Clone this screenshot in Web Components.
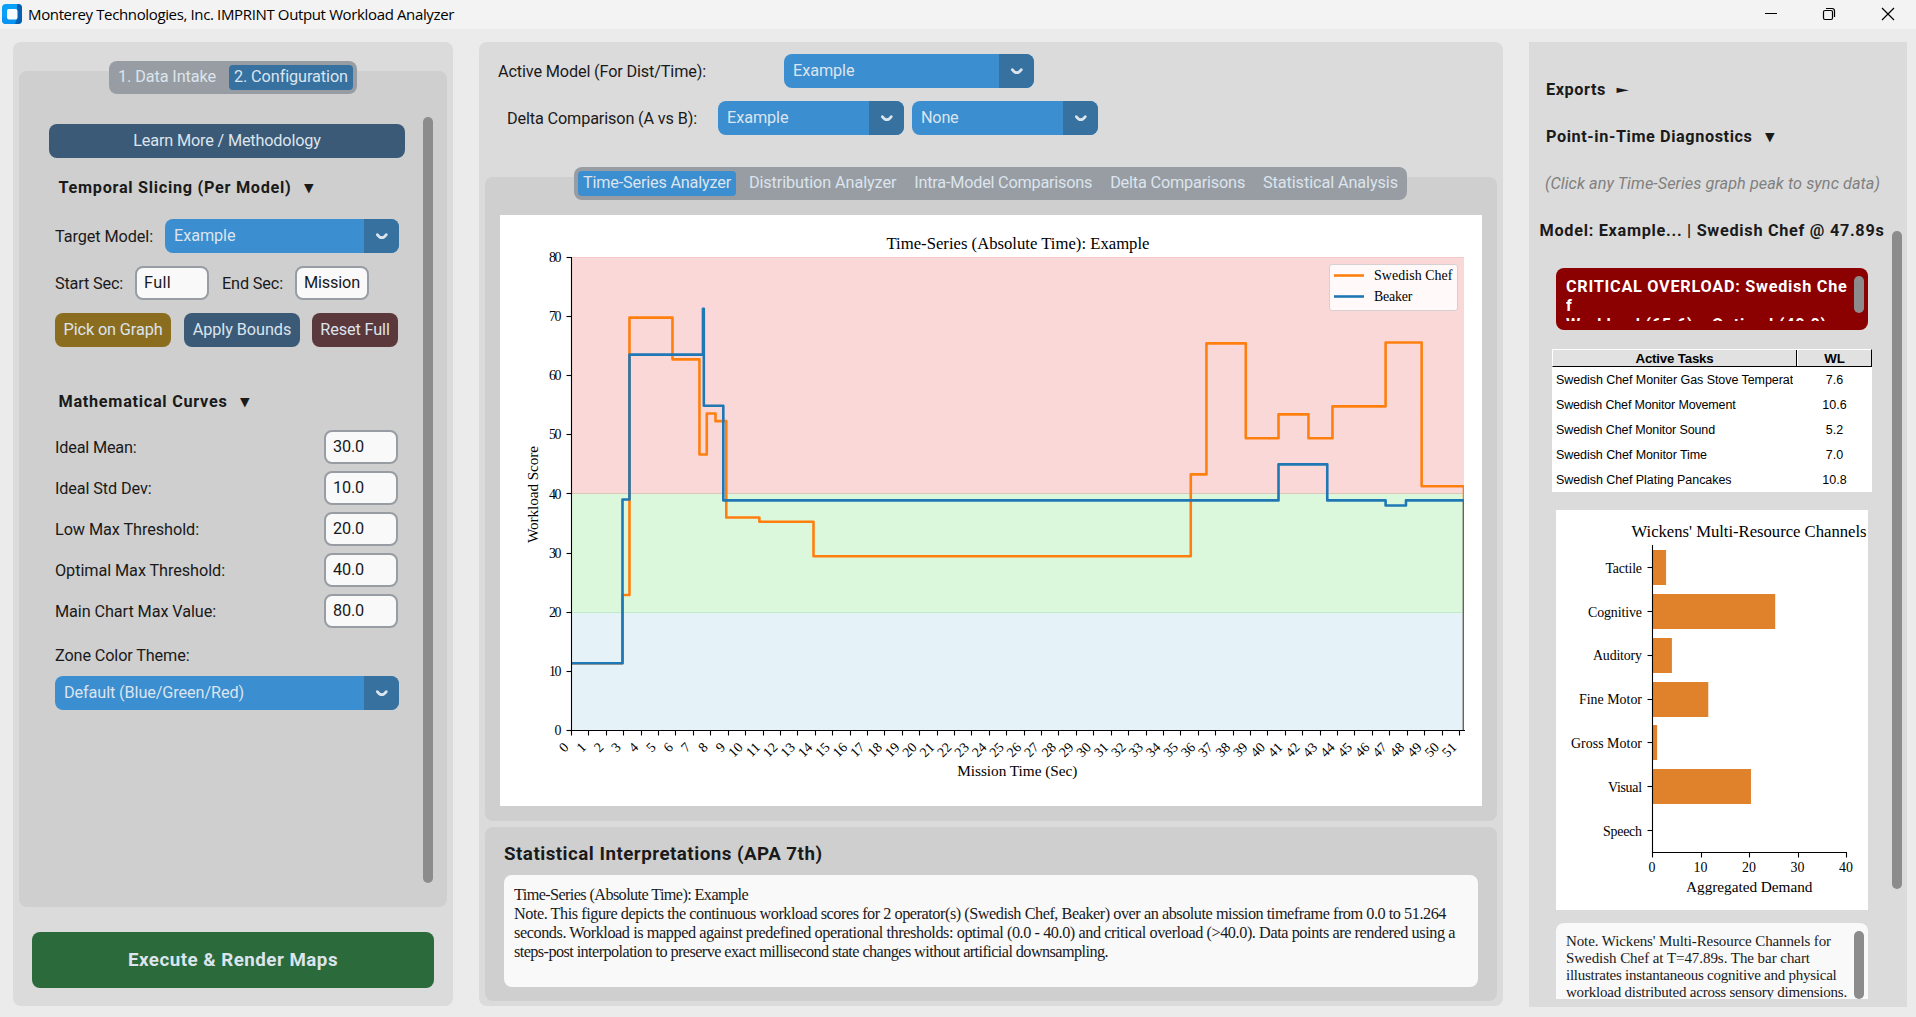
<!DOCTYPE html>
<html lang="en">
<head>
<meta charset="utf-8">
<title>Monterey Technologies, Inc. IMPRINT Output Workload Analyzer</title>
<style>
  html, body {
    margin: 0;
    height: 100%;
    overflow: hidden;
    background: #ebebeb;
    font-family: Roboto, "Liberation Sans", sans-serif;
    font-size: 16.25px;
    color: #1a1a1a;
  }
</style>
</head>
<body>
<app-window></app-window>

<script>
// small helper: attach an open shadow root and fill it
function shadow(el, html) {
  el.attachShadow({ mode: 'open' }).innerHTML = html;
}

class TitleBar extends HTMLElement {
  connectedCallback() {
    shadow(this, `
    <style>
    :host {
      display: flex;
      align-items: center;
      box-sizing: border-box;
      flex: none;
      height: 29px;
      padding: 0 21px 1px 2px;
      background: #f3f3f3;
      color: #000;
      font: 15px/20px "Open Sans", "Noto Sans", sans-serif;
    }
    .logo { margin-right: 6px; }
    .controls { margin-left: auto; display: flex; gap: 45px; }
    svg { display: block; }
    </style>
    <svg class="logo" width="20" height="20" viewBox="0 0 20 20">
      <rect width="20" height="20" rx="4" fill="#0aa0f8"/>
      <path d="M15 0h1a4 4 0 0 1 4 4v12a4 4 0 0 1-4 4H7l-3-2 11-3z" fill="#0560b0"/>
      <path d="M0 13v3a4 4 0 0 0 4 4h9l2-5z" fill="#0a93f0"/>
      <rect x="5" y="5" width="10.500" height="10.500" rx="2" fill="#f7fbff"/>
    </svg>
    <fit-text w="426"><slot></slot></fit-text>
    <div class="controls">
      <svg width="14" height="14" viewBox="0 0 14 14"><path d="M2 6.500h12" stroke="#000"/></svg>
      <svg width="14" height="14" viewBox="0 0 14 14" fill="none" stroke="#000" stroke-width="1.200">
        <rect x="1.500" y="3.500" width="9" height="9" rx="1.500"/>
        <path d="M4 1.500h6a2.500 2.500 0 0 1 2.500 2.500v6"/>
      </svg>
      <svg width="14" height="14" viewBox="0 0 14 14"><path d="M1 1l12 12M13 1L1 13" stroke="#000" stroke-width="1.200"/></svg>
    </div>`);
  }
}

class UiButton extends HTMLElement {
  connectedCallback() {
    shadow(this, `
    <style>
    :host {
      display: flex;
      align-items: center;
      justify-content: center;
      height: 34px;
      border-radius: 8px;
      background: var(--color, #3b5a77);
      color: #dce4ee;
      line-height: 20px;
    }
    </style>
    <slot></slot>`);
  }
}

class UiSelect extends HTMLElement {
  connectedCallback() {
    shadow(this, `
    <style>
    :host {
      display: flex;
      height: 34px;
      border-radius: 8px;
      overflow: hidden;
      background: #3b8ed0;
      color: #dce4ee;
    }
    .value { flex: 1; padding-left: 9px; line-height: 34px; }
    .arrow {
      width: 35px;
      display: flex;
      align-items: center;
      justify-content: center;
      background: #36719f;
    }
    </style>
    <div class="value"><slot></slot></div>
    <div class="arrow">
      <svg width="14" height="8" viewBox="0 0 14 8"><path d="M2.300 2.600Q4.500 5.700 6.800 5.700T11.300 2.600" fill="none" stroke="#dce4ee" stroke-width="2.700" stroke-linecap="round"/></svg>
    </div>`);
  }
}

class UiEntry extends HTMLElement {
  connectedCallback() {
    shadow(this, `
    <style>
    :host {
      display: block;
      box-sizing: border-box;
      width: 74px;
      height: 34px;
      padding-left: 7px;
      border: 2px solid #979da2;
      border-radius: 8px;
      background: #f9f9fa;
      line-height: 29px;
      white-space: nowrap;
    }
    </style>
    <slot></slot>`);
  }
}

class UiTabs extends HTMLElement {
  connectedCallback() {
    shadow(this, `
    <style>
    :host {
      display: flex;
      justify-content: space-between;
      box-sizing: border-box;
      height: 33px;
      padding: 4px;
      border-radius: 8px;
      background: #979da2;
      color: #dce4ee;
    }
    ::slotted(span) {
      padding: 0 5px;
      border-radius: 4px;
      line-height: 24px;
      height: 25px;
    }
    ::slotted(.on) { background: var(--active, #3b8ed0); }
    </style>
    <slot></slot>`);
  }
}

class UiHeading extends HTMLElement {
  connectedCallback() {
    shadow(this, `
    <style>
    :host {
      display: flex;
      height: 20px;
      line-height: 20px;
      font-weight: bold;
      white-space: nowrap;
    }
    .mark {
      margin-left: 12.5px;
      font: 12.500px/20px "DejaVu Sans", sans-serif;
    }
    .right {
      margin-left: 10.5px;
      font-size: 16px;
      transform: scaleY(.65);
    }
    </style>
    <slot></slot>
    ${this.hasAttribute('closed') ? '<span class="mark right">►</span>' : '<span class="mark">▼</span>'}`);
  }
}

class UiScrollbar extends HTMLElement {
  connectedCallback() {
    shadow(this, `
    <style>
    :host {
      display: block;
      flex: none;
      width: 10px;
      border-radius: 5px;
      background: #8c8c8c;
    }
    </style>`);
  }
}

class ConfigPanel extends HTMLElement {
  connectedCallback() {
    const params = [
      ['Ideal Mean:', '30.0', 81.5],
      ['Ideal Std Dev:', '10.0', 96.5],
      ['Low Max Threshold:', '20.0', 144],
      ['Optimal Max Threshold:', '40.0', 170],
      ['Main Chart Max Value:', '80.0', 161]
    ];
    shadow(this, `
    <style>
    :host {
      display: flex;
      flex-direction: column;
      box-sizing: border-box;
      width: 440px;
      padding: 19px 6px 18px;
      border-radius: 8px;
      background: #dbdbdb;
    }
    ui-tabs {
      --active: #36719f;
      width: 248px;
      align-self: center;
      margin-bottom: -23px;
      z-index: 1;
    }
    .frame {
      flex: 1;
      display: flex;
      justify-content: space-between;
      padding: 46px 14px 24px 30px;
      border-radius: 8px;
      background: #cfcfcf;
    }
    .content { width: 356px; padding-top: 7px; }
    ui-heading { margin: 20px 0 21px 9.5px; }
    .row { display: flex; align-items: center; margin: 0 7px 13px 6px; height: 34px; }
    .param { justify-content: space-between; margin-bottom: 7px; }
    .theme { height: 20px; margin: 18px 0 10px 6px; line-height: 20px; }
    .run {
      --color: #2b6a3a;
      height: 56px;
      margin: 25px 13px 0;
      font-size: 18.75px;
      font-weight: bold;
    }
    </style>
    <ui-tabs>
      <span><fit-text w="98">1. Data Intake</fit-text></span>
      <span class="on"><fit-text w="113.500">2. Configuration</fit-text></span>
    </ui-tabs>
    <div class="frame">
      <div class="content">
        <ui-button><fit-text w="187.500">Learn More / Methodology</fit-text></ui-button>
        <ui-heading><fit-text w="233">Temporal Slicing (Per Model)</fit-text></ui-heading>
        <div class="row">
          <fit-text w="98">Target Model:</fit-text>
          <ui-select style="width:234px;flex:none;margin-left:12px"><fit-text w="61.500">Example</fit-text></ui-select>
        </div>
        <div class="row">
          <fit-text w="68">Start Sec:</fit-text>
          <ui-entry style="margin:0 13px 0 12px"><fit-text w="27">Full</fit-text></ui-entry>
          <fit-text w="61">End Sec:</fit-text>
          <ui-entry style="margin-left:12px"><fit-text w="56">Mission</fit-text></ui-entry>
        </div>
        <div class="row">
          <ui-button style="width:116px;--color:#8b6d1f"><fit-text w="99">Pick on Graph</fit-text></ui-button>
          <ui-button style="width:116px;margin:0 12px 0 13px"><fit-text w="98.500">Apply Bounds</fit-text></ui-button>
          <ui-button style="width:86px;--color:#5b383b"><fit-text w="69.500">Reset Full</fit-text></ui-button>
        </div>
        <ui-heading style="margin:45px 0 18px 9.5px"><fit-text w="169">Mathematical Curves</fit-text></ui-heading>
        ${params.map(([name, value, w]) => `
        <div class="row param">
          <fit-text w="${w}">${name}</fit-text>
          <ui-entry><fit-text w="31">${value}</fit-text></ui-entry>
        </div>`).join('')}
        <div class="theme"><fit-text w="134.500">Zone Color Theme:</fit-text></div>
        <ui-select style="width:344px;margin-left:6px"><fit-text w="180">Default (Blue/Green/Red)</fit-text></ui-select>
      </div>
      <ui-scrollbar></ui-scrollbar>
    </div>
    <ui-button class="run"><fit-text w="210">Execute &amp; Render Maps</fit-text></ui-button>`);
  }
}

class TimeSeriesChart extends HTMLElement {
  connectedCallback() {
    const X = t => 71.5 + t * 17.41;
    const Y = v => 515.5 - v * 5.915;
    // [time, value] pairs, each value holds until the next time
    const chef = [[0, 11.36], [2.93, 22.9], [3.33, 69.8], [5.8, 62.75], [7.35, 46.65], [7.77, 53.6],
      [8.27, 52.3], [8.89, 36], [10.79, 35.3], [13.9, 29.45], [35.57, 43.3], [36.47, 65.45],
      [38.73, 49.4], [40.61, 53.45], [42.33, 49.4], [43.71, 54.8], [46.76, 65.6], [48.83, 41.3], [51.264, 0]];
    const beaker = [[0, 11.36], [2.93, 39.05], [3.33, 63.55], [7.55, 71.3], [7.6, 54.9], [8.72, 38.9],
      [40.61, 45], [43.41, 38.9], [46.76, 38.05], [47.93, 38.9], [51.264, 0]];
    const steps = data => data.map(([t, v], i) => i ? `H${X(t)}V${Y(v)}` : `M${X(t)} ${Y(v)}`).join('');
    const zone = (from, to, fill) => `
      <rect x="71.500" y="${Y(to)}" width="892.500" height="${Y(from) - Y(to)}" fill="${fill}"/>`;
    const edge = (v, color) => `<path d="M72 ${Math.floor(Y(v)) + .5}H964" stroke="${color}"/>`;

    let ticks = '';
    for (let v = 0; v <= 80; v += 10) {
      ticks += `<path d="M66.500 ${Math.floor(Y(v)) + .5}h5" class="axis"/>
        <text x="61.500" y="${Y(v) + 4.7}" text-anchor="end" ${v ? 'textLength="12.500"' : ''}>${v}</text>`;
    }
    for (let t = 0; t <= 51; t++) {
      ticks += `<path d="M${Math.floor(X(t)) + .5} 515.500v5" class="axis"/>
        <text transform="translate(${X(t) - 2} 533.200) rotate(-45)" text-anchor="end">${t}</text>`;
    }

    shadow(this, `
    <style>
    :host { display: block; height: 591px; background: #fff; }
    svg { display: block; }
    text { font: 13.9px "Liberation Serif", serif; fill: #000; }
    .axis { stroke: #000; stroke-width: 1.1; fill: none; }
    .line { fill: none; stroke-width: 2.6; stroke-linejoin: round; }
    </style>
    <svg width="982" height="591">
      <defs><clipPath id="plot"><rect x="71.500" y="42" width="892.500" height="473.500"/></clipPath></defs>
      ${zone(0, 20, '#e5f2f8')}
      ${zone(20, 40, '#dcf8dc')}
      ${zone(40, 80, '#fad8d8')}
      ${edge(20, '#bdeccb')}
      ${edge(40, '#d9c5b9')}
      ${edge(80, '#f7c9c9')}
      <g clip-path="url(#plot)">
        <path class="line" stroke="#ff7f0e" d="${steps(chef)}"/>
        <path class="line" stroke="#1f77b4" d="${steps(beaker)}"/>
      </g>
      <path class="axis" d="M71.500 42V515.500H965"/>
      ${ticks}
      <text x="386.500" y="34" style="font-size:16.700px" textLength="263">Time-Series (Absolute Time): Example</text>
      <text x="457.300" y="561" style="font-size:15.300px" textLength="120">Mission Time (Sec)</text>
      <text transform="translate(38.300 328) rotate(-90)" style="font-size:15.300px" textLength="97">Workload Score</text>
      <rect x="829.500" y="49.500" width="128" height="46" rx="2.500" fill="#fff" fill-opacity=".85" stroke="#d6d0d0"/>
      <path d="M834 60.500h30" stroke="#ff7f0e" stroke-width="2.600"/>
      <path d="M834 81.500h30" stroke="#1f77b4" stroke-width="2.600"/>
      <text x="874" y="65.200" textLength="78.500">Swedish Chef</text>
      <text x="874" y="86.200" textLength="38.500">Beaker</text>
    </svg>`);
  }
}

class AnalysisPanel extends HTMLElement {
  connectedCallback() {
    shadow(this, `
    <style>
    :host {
      display: flex;
      flex-direction: column;
      box-sizing: border-box;
      width: 1024px;
      padding: 12px 6px 5px;
      border-radius: 8px;
      background: #dbdbdb;
    }
    .pick { display: flex; align-items: center; height: 34px; margin-bottom: 13px; padding-left: 13px; }
    .delta { padding-left: 22px; margin-bottom: 32px; }
    ui-tabs { width: 833px; margin: 0 0 -23px 89px; z-index: 1; }
    .frame { border-radius: 8px; background: #cfcfcf; }
    .chart { padding: 38px 15px 15px; margin-bottom: 6px; }
    .stats { flex: 1; padding: 16px 19px 14px; display: flex; flex-direction: column; }
    h2 { margin: 0 0 10px; font-size: 18.75px; line-height: 22px; font-weight: bold; }
    .note {
      flex: 1;
      padding: 11px 10px 9px;
      border-radius: 8px;
      background: #f9f9fa;
      font: 16.25px/19px "Liberation Serif", serif;
    }
    .note fit-text { display: block; }
    </style>
    <div class="pick">
      <fit-text w="208">Active Model (For Dist/Time):</fit-text>
      <ui-select style="width:250px;margin-left:78px"><fit-text w="61.500">Example</fit-text></ui-select>
    </div>
    <div class="pick delta">
      <fit-text w="190">Delta Comparison (A vs B):</fit-text>
      <ui-select style="width:186px;margin:0 8px 0 21px"><fit-text w="61.500">Example</fit-text></ui-select>
      <ui-select style="width:186px"><fit-text w="37.500">None</fit-text></ui-select>
    </div>
    <ui-tabs>
      <span class="on"><fit-text w="148">Time-Series Analyzer</fit-text></span>
      <span><fit-text w="147.500">Distribution Analyzer</fit-text></span>
      <span><fit-text w="178">Intra-Model Comparisons</fit-text></span>
      <span><fit-text w="135">Delta Comparisons</fit-text></span>
      <span><fit-text w="135">Statistical Analysis</fit-text></span>
    </ui-tabs>
    <div class="frame chart"><time-series-chart></time-series-chart></div>
    <div class="frame stats">
      <h2><fit-text w="318.500">Statistical Interpretations (APA 7th)</fit-text></h2>
      <div class="note">
        <fit-text w="234">Time-Series (Absolute Time): Example</fit-text>
        <fit-text w="932">Note. This figure depicts the continuous workload scores for 2 operator(s) (Swedish Chef, Beaker) over an absolute mission timeframe from 0.0 to 51.264</fit-text>
        <fit-text w="941">seconds. Workload is mapped against predefined operational thresholds: optimal (0.0 - 40.0) and critical overload (&gt;40.0). Data points are rendered using a</fit-text>
        <fit-text w="594">steps-post interpolation to preserve exact millisecond state changes without artificial downsampling.</fit-text>
      </div>
    </div>`);
  }
}

class TaskTable extends HTMLElement {
  connectedCallback() {
    const tasks = [
      ['Swedish Chef Moniter Gas Stove Temperature', '7.6', 255],
      ['Swedish Chef Monitor Movement', '10.6', 179.5],
      ['Swedish Chef Monitor Sound', '5.2', 159],
      ['Swedish Chef Monitor Time', '7.0', 151],
      ['Swedish Chef Plating Pancakes', '10.8', 175.5]
    ];
    shadow(this, `
    <style>
    :host {
      display: block;
      height: 143px;
      background: #fff;
      color: #000;
      font: 12.500px/25px "Liberation Sans", sans-serif;
    }
    .head {
      display: flex;
      box-sizing: border-box;
      height: 18px;
      margin-bottom: 1px;
      border: 1px solid #000;
      border-top-color: #fff;
      border-left-color: #fff;
      background: #e1e1e1;
      font-size: 13.300px;
      font-weight: bold;
      line-height: 17px;
      text-align: center;
    }
    .head div:first-child { width: 243px; border-right: 1px solid #000; }
    .head div:last-child { flex: 1; border-left: 1px solid #fff; }
    .row { display: flex; height: 25px; }
    .name { width: 237px; margin-left: 4px; overflow: hidden; white-space: nowrap; }
    .wl { flex: 1; text-align: center; padding-left: 4px; }
    </style>
    <div class="head">
      <div><fit-text w="78">Active Tasks</fit-text></div>
      <div>WL</div>
    </div>
    ${tasks.map(([name, wl, w]) => `
    <div class="row">
      <div class="name"><fit-text w="${w}">${name}</fit-text></div>
      <div class="wl">${wl}</div>
    </div>`).join('')}`);
  }
}

class DemandChart extends HTMLElement {
  connectedCallback() {
    // channel, demand, label width
    const channels = [
      ['Tactile', 2.8, 36.5], ['Cognitive', 25.3, 54], ['Auditory', 4, 49], ['Fine Motor', 11.5, 63],
      ['Gross Motor', 0.95, 71], ['Visual', 20.3, 34], ['Speech', 0, 39]
    ];
    const bars = channels.map(([name, value, w], i) => {
      const y = 57.5 + i * 43.85;
      return `
      <rect x="96.500" y="${Math.round(y - 17.5)}" width="${value * 4.85}" height="35" fill="#e0812c"/>
      <path class="axis" d="M91.500 ${Math.floor(y) + .5}h5"/>
      <text x="${86 - w}" y="${y + 5.2}" textLength="${w}">${name}</text>`;
    }).join('');
    const ticks = [0, 10, 20, 30, 40].map(v => `
      <path class="axis" d="M${Math.floor(96.5 + v * 4.85) + .5} 342.500v5"/>
      <text x="${96 + v * 4.85}" y="361.700" text-anchor="middle">${v}</text>`).join('');
    shadow(this, `
    <style>
    :host { display: block; height: 400px; background: #fff; }
    svg { display: block; }
    text { font: 13.9px "Liberation Serif", serif; fill: #000; }
    .axis { stroke: #000; stroke-width: 1.1; fill: none; }
    </style>
    <svg width="312" height="400">
      ${bars}
      <path class="axis" d="M96.500 35V342.500H291"/>
      ${ticks}
      <text x="75.500" y="26.700" style="font-size:16.700px" textLength="235">Wickens' Multi-Resource Channels</text>
      <text x="130" y="382" style="font-size:15.300px" textLength="126.500">Aggregated Demand</text>
    </svg>`);
  }
}

class DiagnosticsPanel extends HTMLElement {
  connectedCallback() {
    shadow(this, `
    <style>
    :host {
      display: flex;
      box-sizing: border-box;
      width: 378px;
      height: 965px;
      padding: 38px 5px 8px 0;
      background: #dbdbdb;
    }
    .content { width: 357px; margin-right: 6px; overflow: hidden; flex: none; }
    ui-heading { margin: 0 0 27px 17px; }
    .hint {
      height: 20px;
      margin: 0 0 27px 16px;
      line-height: 20px;
      font-style: italic;
      color: #808080;
    }
    .model {
      height: 20px;
      margin: 0 0 27px 10.5px;
      line-height: 20px;
      font-weight: bold;
    }
    .alert, .note {
      display: flex;
      justify-content: space-between;
      box-sizing: border-box;
      width: 312px;
      margin: 0 0 19px 27px;
      border-radius: 8px;
    }
    .alert {
      height: 62px;
      padding: 8px 4px 9px 10px;
      background: #8b0000;
      color: #fff;
      font-weight: bold;
      line-height: 19px;
    }
    .alert .lines { height: 45px; padding-top: 1px; box-sizing: border-box; overflow: hidden; }
    .alert ui-scrollbar { height: 37px; }
    fit-text { display: block; }
    task-table { width: 320px; margin: 0 0 18px 23px; }
    demand-chart { width: 312px; margin: 0 0 13px 27px; }
    .note {
      height: 76px;
      padding: 8px 4px 0 10px;
      margin-bottom: 0;
      border-radius: 8px 8px 0 0;
      background: #f9f9fa;
      font: 15px/17px "Liberation Serif", serif;
    }
    .note .lines { padding-top: 1.5px; }
    .side { margin: 151px 0 110px; }
    </style>
    <div class="content">
      <ui-heading closed><fit-text w="60">Exports</fit-text></ui-heading>
      <ui-heading><fit-text w="206.500">Point-in-Time Diagnostics</fit-text></ui-heading>
      <div class="hint"><fit-text w="335">(Click any Time-Series graph peak to sync data)</fit-text></div>
      <div class="model"><fit-text w="345">Model: Example... | Swedish Chef @ 47.89s</fit-text></div>
      <div class="alert">
        <div class="lines">
          <fit-text w="281.500">CRITICAL OVERLOAD: Swedish Che</fit-text>
          <fit-text w="6">f</fit-text>
          <fit-text w="261">Workload (65.6) &gt; Optimal (40.0)</fit-text>
        </div>
        <ui-scrollbar></ui-scrollbar>
      </div>
      <task-table></task-table>
      <demand-chart></demand-chart>
      <div class="note">
        <div class="lines">
          <fit-text w="265">Note. Wickens' Multi-Resource Channels for</fit-text>
          <fit-text w="244">Swedish Chef at T=47.89s. The bar chart</fit-text>
          <fit-text w="270.500">illustrates instantaneous cognitive and physical</fit-text>
          <fit-text w="281">workload distributed across sensory dimensions.</fit-text>
        </div>
        <ui-scrollbar></ui-scrollbar>
      </div>
    </div>
    <ui-scrollbar class="side"></ui-scrollbar>`);
  }
}

class AppWindow extends HTMLElement {
  connectedCallback() {
    shadow(this, `
    <style>
    :host { display: flex; flex-direction: column; height: 1017px; width: 1916px; }
    main { flex: 1; display: flex; gap: 26px; padding: 13px 9px 10px 13px; }
    config-panel, analysis-panel { flex: none; margin-bottom: 1px; }
    diagnostics-panel { flex: none; }
    </style>
    <title-bar>Monterey Technologies, Inc. IMPRINT Output Workload Analyzer</title-bar>
    <main>
      <config-panel></config-panel>
      <analysis-panel></analysis-panel>
      <diagnostics-panel></diagnostics-panel>
    </main>`);
  }
}

// One line of text, tracked so that it fills the width given in "w"
class FitText extends HTMLElement {
  connectedCallback() {
    shadow(this, `
    <style>
    :host { display: inline-block; white-space: nowrap; }
    span { display: inline-block; }
    </style>
    <span><slot></slot></span>`);
    const span = this.shadowRoot.querySelector('span');
    const slot = this.shadowRoot.querySelector('slot');
    const text = slot.assignedNodes({ flatten: true }).map(n => n.textContent).join('');
    const w = parseFloat(this.getAttribute('w'));
    const natural = span.getBoundingClientRect().width;
    span.style.letterSpacing = (w - natural) / text.length + 'px';
  }
}

customElements.define('app-window', AppWindow);
customElements.define('title-bar', TitleBar);
customElements.define('config-panel', ConfigPanel);
customElements.define('analysis-panel', AnalysisPanel);
customElements.define('diagnostics-panel', DiagnosticsPanel);
customElements.define('ui-button', UiButton);
customElements.define('ui-select', UiSelect);
customElements.define('ui-entry', UiEntry);
customElements.define('ui-tabs', UiTabs);
customElements.define('ui-heading', UiHeading);
customElements.define('ui-scrollbar', UiScrollbar);
customElements.define('time-series-chart', TimeSeriesChart);
customElements.define('task-table', TaskTable);
customElements.define('demand-chart', DemandChart);
// last, so every surrounding style is in place when it measures
customElements.define('fit-text', FitText);
</script>
</body>
</html>
